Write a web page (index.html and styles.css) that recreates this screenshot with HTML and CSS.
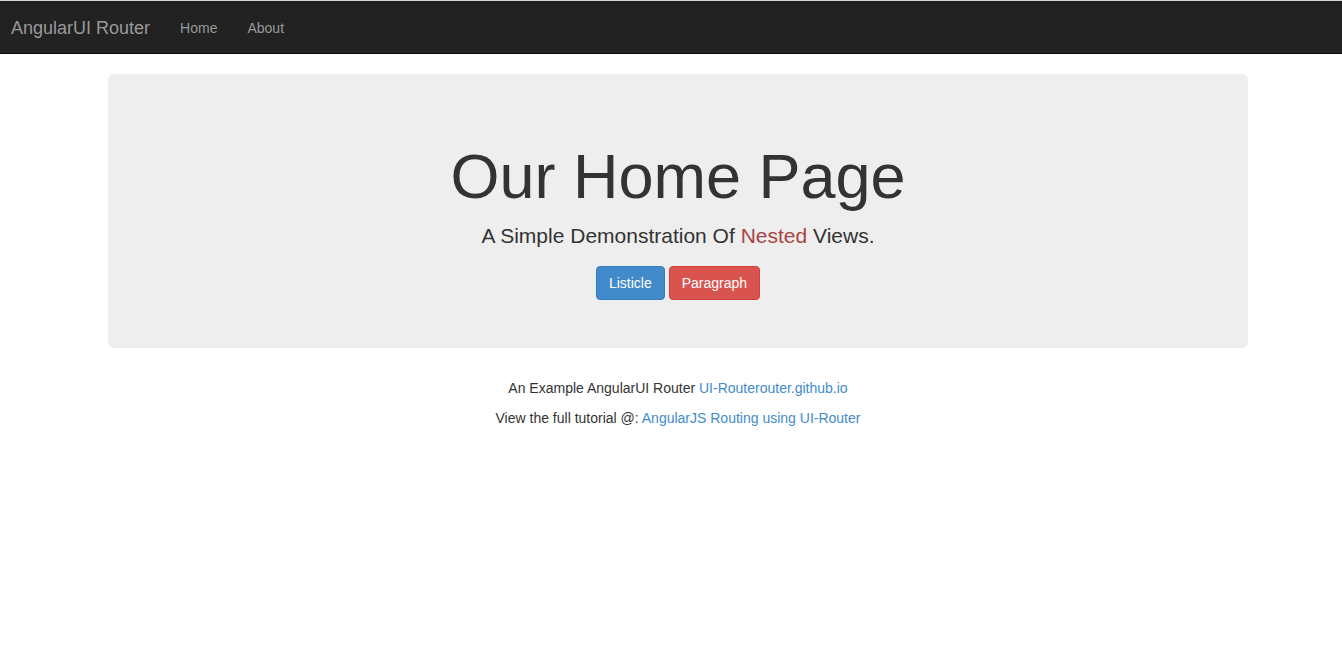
FILE: index.html
```html
<!DOCTYPE html>
<html>
<head>
<meta charset="utf-8">
<link rel="stylesheet" href="styles.css">
</head>
<body>
<div class="topline"></div>
<nav class="navbar">
  <a class="brand" href="#">AngularUI Router</a>
  <ul class="nav">
    <li><a href="#">Home</a></li>
    <li><a href="#">About</a></li>
  </ul>
</nav>
<main class="page">
  <section class="jumbotron">
    <h1>Our Home Page</h1>
    <p class="lead">A Simple Demonstration Of <span class="danger">Nested</span> Views.</p>
    <div class="buttons">
      <a class="btn btn-primary" href="#">Listicle</a>
      <a class="btn btn-danger" href="#">Paragraph</a>
    </div>
  </section>
  <footer class="foot">
    <p>An Example AngularUI Router <a href="#">UI-Routerouter.github.io</a></p>
    <p>View the full tutorial @: <a href="#">AngularJS Routing using UI-Router</a></p>
  </footer>
</main>
</body>
</html>
```
FILE: styles.css
```css
html, body {
  margin: 0;
  padding: 0;
}
body {
  font-family: "Liberation Sans", Arial, sans-serif;
  font-size: 14px;
  line-height: 1.428571;
  color: #333;
  background: #fff;
}
a {
  color: #428bca;
  text-decoration: none;
}
.topline {
  height: 1px;
  background: #d4d4d4;
}
.navbar {
  display: flex;
  align-items: center;
  height: 50px;
  background: #222;
  border-top: 2px solid #1e1e1e;
  border-bottom: 1px solid #080808;
}
.brand {
  color: #999;
  font-size: 18px;
  line-height: 20px;
  padding: 15px 15px 15px 11px;
}
.nav {
  display: flex;
  list-style: none;
  margin: 0;
  padding: 0;
}
.nav a {
  display: block;
  color: #999;
  padding: 15px;
  line-height: 20px;
}
.page {
  padding-left: 14px;
}
.jumbotron {
  width: 1140px;
  margin: 20px auto 31px;
  box-sizing: border-box;
  padding: 48px 60px;
  background: #eee;
  border-radius: 6px;
  text-align: center;
}
.jumbotron h1 {
  font-size: 63px;
  font-weight: 500;
  line-height: 1.1;
  margin: 20px 0 10px;
  color: #333;
}
.lead {
  font-size: 21px;
  line-height: 1.428571;
  margin: 0 0 15px;
}
.danger {
  color: #a94442;
}
.buttons {
  display: flex;
  justify-content: center;
  gap: 4px;
}
.btn {
  display: inline-block;
  padding: 6px 12px;
  font-size: 14px;
  line-height: 20px;
  border: 1px solid transparent;
  border-radius: 4px;
  color: #fff;
}
.btn-primary {
  background: #428bca;
  border-color: #357ebd;
}
.btn-danger {
  background: #d9534f;
  border-color: #d43f3a;
}
.foot {
  text-align: center;
}
.foot p {
  margin: 0 0 10px;
}
```
